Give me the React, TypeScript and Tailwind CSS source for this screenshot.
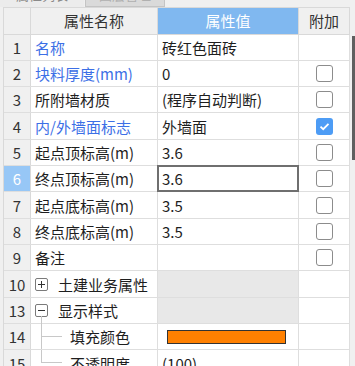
import React from "react";

type Row = {
  n: string;
  name: string;
  blue?: boolean;
  value?: string;
  check?: boolean | null;
  selected?: boolean;
  kind?: "plus" | "minus" | "child" | "lastChild";
  grey?: boolean;
  color?: string;
};

const rows: Row[] = [
  { n: "1", name: "名称", blue: true, value: "砖红色面砖", check: null },
  { n: "2", name: "块料厚度(mm)", blue: true, value: "0", check: false },
  { n: "3", name: "所附墙材质", value: "(程序自动判断)", check: false },
  { n: "4", name: "内/外墙面标志", blue: true, value: "外墙面", check: true },
  { n: "5", name: "起点顶标高(m)", value: "3.6", check: false },
  { n: "6", name: "终点顶标高(m)", value: "3.6", check: false, selected: true },
  { n: "7", name: "起点底标高(m)", value: "3.5", check: false },
  { n: "8", name: "终点底标高(m)", value: "3.5", check: false },
  { n: "9", name: "备注", value: "", check: false },
  { n: "10", name: "土建业务属性", kind: "plus", grey: true, check: null },
  { n: "13", name: "显示样式", kind: "minus", grey: true, check: null },
  { n: "14", name: "填充颜色", kind: "child", color: "#ff8000", check: null },
  { n: "15", name: "不透明度", kind: "lastChild", value: "(100)", check: null },
];

function CheckBox({ on }: { on: boolean }) {
  if (on) {
    return (
      <span className="flex h-[17px] w-[17px] items-center justify-center rounded-[3px] bg-[#4d9cf5]">
        <svg width="11" height="9" viewBox="0 0 11 9">
          <path d="M1.5 4.6 L4.2 7.2 L9.5 1.8" fill="none" stroke="#fff" strokeWidth="1.8" />
        </svg>
      </span>
    );
  }
  return <span className="h-[17px] w-[17px] rounded-[3px] border-[1.5px] border-[#8c8c8c] bg-white" />;
}

function NameCell({ r }: { r: Row }) {
  const color = r.blue ? "text-[#3c6fe6]" : "text-[#1e1e1e]";
  if (r.kind === "plus" || r.kind === "minus") {
    return (
      <div className="flex items-center">
        <span className="relative ml-[4px] flex h-[13px] w-[13px] items-center justify-center rounded-[2px] border border-[#7a7a7a] bg-white">
          <span className="h-px w-[7px] bg-[#333]" />
          {r.kind === "plus" && <span className="absolute h-[7px] w-px bg-[#333]" />}
          {r.kind === "minus" && <span className="absolute left-[5px] top-full h-[8px] w-px bg-[#c8c8c8]" />}
        </span>
        <span className={`ml-[10px] ${color}`}>{r.name}</span>
      </div>
    );
  }
  if (r.kind === "child" || r.kind === "lastChild") {
    return (
      <div className="flex h-full items-stretch">
        <div className="ml-[10px] flex w-[21px] flex-col">
          <div className="h-1/2 border-b border-l border-[#c8c8c8]" />
          <div className={`flex-1 ${r.kind === "child" ? "border-l border-[#c8c8c8]" : ""}`} />
        </div>
        <span className={`ml-[8px] self-center ${color}`}>{r.name}</span>
      </div>
    );
  }
  return <span className={`pl-[4px] ${color}`}>{r.name}</span>;
}

export default function App() {
  return (
    <div
      className="h-[366px] w-[355px] overflow-hidden bg-[#f0f0f0] text-[15px] leading-none"
      style={{ fontFamily: '"Noto Sans CJK SC", "Noto Sans", sans-serif' }}
    >
      {/* tab strip, only the bottom edge shows */}
      <div className="flex h-[7px] overflow-hidden text-[13px]">
        <div className="-mt-[19px] flex h-[26px] w-[84px] items-center justify-center bg-[#ececec] text-[#8a8a8a]">
          属性列表
        </div>
        <div className="-mt-[19px] ml-[1px] flex h-[26px] w-[80px] items-center justify-center border border-[#c4c4c4] bg-[#dadada] text-[#b0b0b0]">
          图层管理
        </div>
      </div>

      <div className="flex">
        <div className="ml-[3px] w-[347px] border-l border-t border-[#d9d9d9] bg-white">
          {/* header */}
          <div className="flex h-[26.5px] border-b border-[#d9d9d9]">
            <div className="w-[27px] border-r border-[#d9d9d9] bg-[#f0f0f0]" />
            <div className="flex w-[127px] items-center justify-center border-r border-[#d9d9d9] bg-[#f0f0f0] text-[#333]">
              属性名称
            </div>
            <div className="flex w-[141px] items-center justify-center border-r border-[#d9d9d9] bg-[#80b8f0] text-white">
              属性值
            </div>
            <div className="flex w-[51px] items-center justify-center border-r border-[#d9d9d9] bg-[#f0f0f0] text-[#333]">
              附加
            </div>
          </div>

          {rows.map((r) => (
            <div key={r.n} className="flex h-[26.33px] border-b border-[#dedede]">
              <div
                className={`flex w-[27px] items-center justify-center border-r border-[#d9d9d9] ${
                  r.selected ? "bg-[#97c7f6] text-white" : "bg-[#f0f0f0] text-[#333]"
                }`}
              >
                {r.n}
              </div>
              <div className="flex w-[127px] items-center border-r border-[#dedede]">
                <NameCell r={r} />
              </div>
              <div
                className={`relative flex w-[141px] items-center border-r border-[#dedede] text-[#1e1e1e] ${
                  r.grey ? "bg-[#e8e8e8]" : ""
                }`}
              >
                {r.color ? (
                  <span className="ml-[9px] h-[14px] w-[119px] border border-[#333]" style={{ background: r.color }} />
                ) : (
                  <span className="pl-[4px]">{r.value}</span>
                )}
                {r.selected && <div className="absolute -inset-[1px] border-2 border-[#6f6f6f]" />}
              </div>
              <div className="flex w-[51px] items-center justify-center border-r border-[#dedede]">
                {r.check !== null && r.check !== undefined && <CheckBox on={r.check} />}
              </div>
            </div>
          ))}
        </div>

        {/* scrollbar */}
        <div className="ml-[2px] flex w-[3px] flex-col">
          <div className="h-[29px]" />
          <div className="h-[124px] bg-[#5f5f5f]" />
        </div>
      </div>
    </div>
  );
}
